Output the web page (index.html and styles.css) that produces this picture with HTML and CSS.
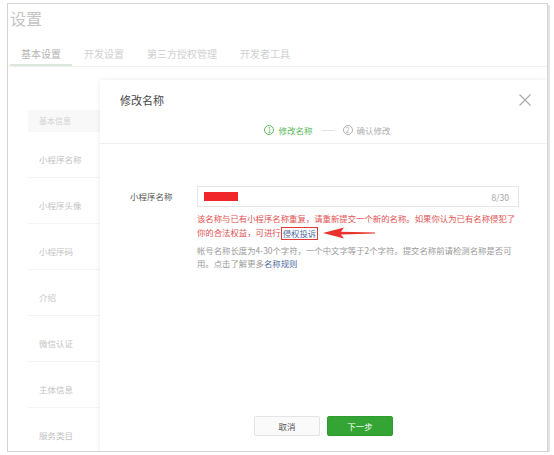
FILE: index.html
```html
<!DOCTYPE html>
<html lang="zh-CN">
<head>
<meta charset="utf-8">
<title>设置</title>
<link rel="stylesheet" href="styles.css">
</head>
<body>
<div class="frame">
  <div class="page-title">设置</div>
  <div class="tabs">
    <div class="tab active">基本设置</div>
    <div class="tab">开发设置</div>
    <div class="tab">第三方授权管理</div>
    <div class="tab">开发者工具</div>
  </div>
  <div class="side">
    <div class="side-head">基本信息</div>
    <div class="side-item">小程序名称</div>
    <div class="side-item">小程序头像</div>
    <div class="side-item">小程序码</div>
    <div class="side-item">介绍</div>
    <div class="side-item">微信认证</div>
    <div class="side-item">主体信息</div>
    <div class="side-item last">服务类目</div>
  </div>

  <div class="modal">
    <div class="modal-head">
      <div class="modal-title-row">
        <div class="modal-title">修改名称</div>
        <svg class="close" width="12" height="12" viewBox="0 0 12 12"><path d="M0.5 0.5 L11.5 11.5 M11.5 0.5 L0.5 11.5" stroke="#a8a8a8" stroke-width="1.1" fill="none"/></svg>
      </div>
      <div class="steps">
        <span class="step current"><span class="num">1</span>修改名称</span>
        <span class="step-line"></span>
        <span class="step"><span class="num">2</span>确认修改</span>
      </div>
    </div>
    <div class="modal-body">
      <div class="form-row">
        <div class="label">小程序名称</div>
        <div class="field">
          <div class="input">
            <span class="redact"></span>
            <span class="count">8/30</span>
          </div>
          <div class="error">该名称与已有小程序名称重复，请重新提交一个新的名称。如果你认为已有名称侵犯了你的合法权益，可进行<span class="mark"><a class="link">侵权投诉</a></span><svg class="arrow" width="54" height="14" viewBox="0 0 54 14"><path d="M1 7 L22 1.5 L19 5.7 L53 6.6 L53 7.6 L19 8.5 L22 12.5 Z" fill="#e8322b"/></svg></div>
          <div class="hint">帐号名称长度为4-30个字符，一个中文字等于2个字符。提交名称前请检测名称是否可用。点击了解更多<a class="link">名称规则</a></div>
        </div>
      </div>
    </div>
    <div class="modal-foot">
      <button class="btn btn-cancel">取消</button>
      <button class="btn btn-next">下一步</button>
    </div>
  </div>
</div>
</body>
</html>
```

FILE: styles.css
```css
html, body {
  margin: 0;
  padding: 0;
  background: #ffffff;
}
body {
  padding: 3px 0 0 7px;
  font-family: "Noto Sans CJK SC", "Noto Sans", sans-serif;
}
.frame {
  position: relative;
  width: 539px;
  height: 447px;
  border: 1px solid #d4d4d4;
  box-shadow: 2px 2px 0 #e4e4e4;
  background: #fff;
  overflow: hidden;
}
.page-title {
  font-size: 16px;
  line-height: 22px;
  color: #c4c4c4;
  padding: 3px 0 0 2px;
  height: 27px;
}
.tabs {
  display: flex;
  gap: 1px;
  margin-top: 10px;
  padding-left: 2px;
  border-bottom: 1px solid #f0f0f0;
}
.tab {
  font-size: 10px;
  line-height: 20px;
  height: 20px;
  padding: 0 11px;
  color: #d0d0d0;
  border-bottom: 2px solid transparent;
}
.tab.active {
  color: #b4b4b4;
  border-bottom-color: #dbe8db;
}
.side {
  margin: 43px 0 0 20px;
  width: 90px;
}
.side-head {
  height: 22px;
  line-height: 22px;
  padding-left: 11px;
  font-size: 8px;
  color: #d2d2d2;
  background: #f8f8f8;
}
.side-item {
  height: 46px;
  box-sizing: border-box;
  padding: 20px 0 0 11px;
  line-height: 14px;
  font-size: 8.5px;
  color: #c4c4c4;
  border-bottom: 1px solid #f4f4f4;
}
.side-item.last {
  border-bottom: none;
}

.modal {
  position: absolute;
  left: 92px;
  top: 76px;
  right: 0;
  bottom: 0;
  background: #fff;
  box-shadow: 0 0 5px rgba(0, 0, 0, 0.09);
  display: flex;
  flex-direction: column;
}
.modal-head {
  padding: 12px 16px 6px 20px;
  border-bottom: 1px solid #efefef;
}
.modal-title-row {
  display: flex;
  justify-content: space-between;
  align-items: center;
  height: 16px;
}
.modal-title {
  font-size: 11px;
  line-height: 16px;
  color: #444;
}
.steps {
  margin-top: 15px;
  display: flex;
  justify-content: center;
  align-items: center;
  height: 14px;
  padding-left: 4px;
}
.step {
  display: flex;
  align-items: center;
  font-size: 8.5px;
  line-height: 14px;
  color: #b0b0b0;
}
.step.current {
  color: #5cb85c;
}
.num {
  width: 8px;
  height: 8px;
  border: 1px solid currentColor;
  border-radius: 50%;
  font-size: 7px;
  line-height: 8px;
  text-align: center;
  margin-right: 4px;
}
.step-line {
  width: 13px;
  height: 1px;
  background: #e2e2e2;
  margin: 0 8px 0 9px;
}
.modal-body {
  flex: 1;
  padding: 42px 0 0 30px;
}
.form-row {
  display: flex;
  align-items: flex-start;
}
.label {
  width: 67px;
  font-size: 8.5px;
  line-height: 21px;
  color: #555;
}
.field {
  width: 322px;
}
.input {
  height: 21px;
  box-sizing: border-box;
  border: 1px solid #e6e6e6;
  display: flex;
  align-items: center;
  justify-content: space-between;
  padding: 0 9px 0 6px;
}
.redact {
  width: 34px;
  height: 9px;
  background: #f0262a;
}
.count {
  font-size: 8.5px;
  color: #a4a4a4;
}
.error {
  position: relative;
  margin-top: 4px;
  font-size: 8.4px;
  line-height: 14px;
  color: #e25252;
}
.mark {
  display: inline-block;
  border: 1.5px solid #e23a34;
  line-height: 11px;
  padding: 0 1px;
  vertical-align: middle;
}
.link {
  color: #4f6da3;
}
.arrow {
  position: absolute;
  left: 125px;
  bottom: 0;
}
.hint {
  margin-top: 4px;
  font-size: 8.4px;
  line-height: 13px;
  color: #9a9a9a;
}
.modal-foot {
  display: flex;
  justify-content: center;
  gap: 7px;
  padding-bottom: 15px;
}
.btn {
  width: 66px;
  height: 20px;
  font-family: inherit;
  font-size: 8.5px;
  border-radius: 2px;
  padding: 0;
}
.btn-cancel {
  background: #fafafa;
  border: 1px solid #e4e4e4;
  color: #555;
}
.btn-next {
  background: #34a534;
  border: 1px solid #2f9c2f;
  color: #fff;
}
```
